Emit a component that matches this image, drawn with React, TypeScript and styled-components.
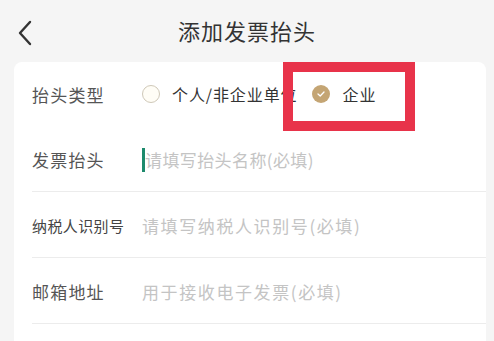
import React from "react";
import styled, { createGlobalStyle } from "styled-components";

const GlobalStyle = createGlobalStyle`
    html, body {
        margin: 0;
        padding: 0;
        background: #f5f5f5;
        font-family: "Noto Sans CJK SC", "Noto Sans", sans-serif;
    }
`;

const Page = styled.div`
    width: 494px;
    height: 341px;
    overflow: hidden;
    background: #f5f5f5;
`;

const Header = styled.div`
    position: relative;
    height: 62px;
    display: flex;
    align-items: center;
    justify-content: center;
`;

const BackButton = styled.div`
    position: absolute;
    left: 14px;
    top: 18px;
    width: 22px;
    height: 30px;
    display: flex;
    align-items: center;
    justify-content: center;
`;

const Title = styled.h1`
    margin: 0;
    font-size: 22px;
    font-weight: 400;
    letter-spacing: 1px;
    color: #333;
    padding-bottom: 2px;
`;

const Card = styled.div`
    position: relative;
    margin: 0 8px 0 14px;
    background: #fff;
    border-radius: 8px 8px 0 0;
    height: 290px;
`;

const Row = styled.div<{ $first?: boolean }>`
    display: flex;
    align-items: center;
    margin-left: 18px;
    height: ${(p) => (p.$first ? "64px" : "66px")};
    padding-top: ${(p) => (p.$first ? "0" : "2px")};
    box-sizing: border-box;
    border-bottom: ${(p) => (p.$first ? "none" : "1px solid #ececec")};
`;

const Label = styled.div<{ $small?: boolean }>`
    width: 110px;
    flex-shrink: 0;
    font-size: ${(p) => (p.$small ? "15px" : "17px")};
    letter-spacing: ${(p) => (p.$small ? "0.4px" : "1.2px")};
    color: ${(p) => (p.$small ? "#444" : "#555")};
`;

const Placeholder = styled.div<{ $spacing?: number }>`
    font-size: 17px;
    letter-spacing: ${(p) => p.$spacing ?? 1.6}px;
    color: #c4c4c4;
    display: flex;
    align-items: center;
`;

const Cursor = styled.span`
    display: inline-block;
    width: 3px;
    height: 24px;
    background: #1d8a6c;
    margin-right: 0;
`;

const Options = styled.div`
    display: flex;
    align-items: center;
`;

const Option = styled.div`
    display: flex;
    align-items: center;
    margin-right: 15px;
    font-size: 16px;
    letter-spacing: 0.9px;
    color: #333;
`;

const Radio = styled.span<{ $checked?: boolean }>`
    width: 18px;
    height: 18px;
    border-radius: 50%;
    box-sizing: border-box;
    margin-right: 12px;
    display: inline-flex;
    align-items: center;
    justify-content: center;
    background: ${(p) => (p.$checked ? "#c4a574" : "#fffdf6")};
    border: ${(p) => (p.$checked ? "none" : "1.5px solid #cfc8b8")};
`;

const Highlight = styled.div`
    position: absolute;
    left: 269px;
    top: 0;
    width: 132px;
    height: 69px;
    box-sizing: border-box;
    border: 10px solid #e8334a;
`;

function App() {
    return (
        <Page>
            <GlobalStyle />
            <Header>
                <BackButton>
                    <svg width="16" height="26" viewBox="0 0 16 26">
                        <path
                            d="M13 2 L3 13 L13 24"
                            fill="none"
                            stroke="#333"
                            strokeWidth="2.4"
                            strokeLinecap="round"
                            strokeLinejoin="round"
                        />
                    </svg>
                </BackButton>
                <Title>添加发票抬头</Title>
            </Header>

            <Card>
                <Row $first>
                    <Label>抬头类型</Label>
                    <Options>
                        <Option>
                            <Radio />
                            个人/非企业单位
                        </Option>
                        <Option>
                            <Radio $checked>
                                <svg width="10" height="8" viewBox="0 0 10 8">
                                    <path
                                        d="M2 4 L4.2 6 L8 2"
                                        fill="none"
                                        stroke="#fff"
                                        strokeWidth="1.3"
                                        strokeLinecap="round"
                                        strokeLinejoin="round"
                                    />
                                </svg>
                            </Radio>
                            企业
                        </Option>
                    </Options>
                </Row>
                <Row>
                    <Label>发票抬头</Label>
                    <Placeholder $spacing={0.4}>
                        <Cursor />
                        请填写抬头名称(必填)
                    </Placeholder>
                </Row>
                <Row>
                    <Label $small>纳税人识别号</Label>
                    <Placeholder>请填写纳税人识别号(必填)</Placeholder>
                </Row>
                <Row>
                    <Label>邮箱地址</Label>
                    <Placeholder>用于接收电子发票(必填)</Placeholder>
                </Row>
                <Highlight />
            </Card>
        </Page>
    );
}

export default App;
